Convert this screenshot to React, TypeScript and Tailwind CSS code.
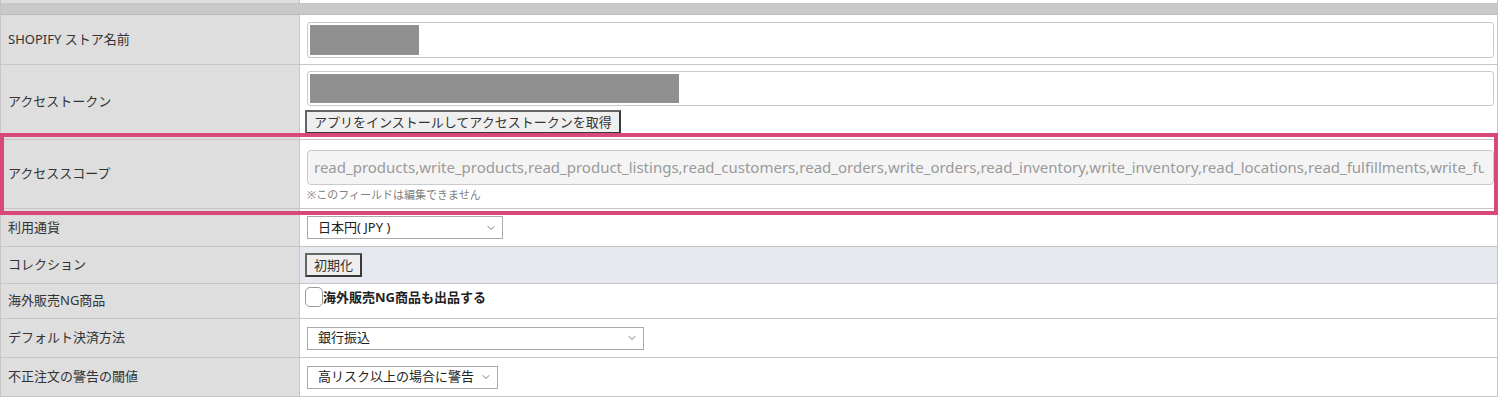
import { ChevronDown } from "lucide-react";
import type { ReactNode } from "react";

const SCOPES =
  "read_products,write_products,read_product_listings,read_customers,read_orders,write_orders,read_inventory,write_inventory,read_locations,read_fulfillments,write_fulfillments,read_shipping,write_shipping";

function Row({
  h,
  label,
  children,
  right = "bg-white",
}: {
  h: string;
  label?: string;
  children?: ReactNode;
  right?: string;
}) {
  return (
    <div className={`flex ${h} border-b border-[#c6c6c6]`}>
      <div className="w-[299px] shrink-0 bg-[#dedede] border-r border-[#c6c6c6] flex items-center pl-[7px] text-[13px] text-[#333]">
        {label}
      </div>
      <div className={`flex-1 min-w-0 flex items-center pl-[7px] pr-[3px] ${right}`}>{children}</div>
    </div>
  );
}

function FakeSelect({ w, text }: { w: string; text: string }) {
  return (
    <div
      className={`${w} h-[23px] border border-[#a9a9a9] bg-white flex items-center justify-between pl-[10px] pr-[5px] text-[13px] text-[#222]`}
    >
      <span>{text}</span>
      <ChevronDown className="h-3 w-3 text-[#555]" strokeWidth={1.6} />
    </div>
  );
}

function Btn({ children }: { children: ReactNode }) {
  return (
    <button className="h-[24px] px-[7px] -ml-[2px] border-2 border-[#3a3a3a] border-t-[#666] border-l-[#666] bg-[#efefef] text-[13px] text-[#333] leading-none">
      {children}
    </button>
  );
}

export default function App() {
  return (
    <div className="relative w-[1500px] h-[397px] bg-white font-['Noto_Sans','Noto_Sans_CJK_JP',sans-serif] overflow-hidden">
      <div className="w-[1498px] border-x border-[#c6c6c6]">
        <Row h="h-[4px]" />
        <div className="h-[11px] bg-[#c9c9c9] border-b border-[#bcbcbc]" />

        <Row h="h-[50px]" label="SHOPIFY ストア名前">
          <div className="flex-1 h-[36px] border border-[#cacaca] rounded-[3px] p-[2px]">
            <div className="w-[109px] h-full bg-[#8f8f8f]" />
          </div>
        </Row>

        <Row h="h-[75px]" label="アクセストークン">
          <div className="flex-1 min-w-0 flex flex-col items-start pt-[1px]">
            <div className="w-full h-[35px] border border-[#cacaca] rounded-[3px] p-[2px]">
              <div className="w-[369px] h-full bg-[#8f8f8f]" />
            </div>
            <div className="mt-[3px]">
              <Btn>アプリをインストールしてアクセストークンを取得</Btn>
            </div>
          </div>
        </Row>

        <Row h="h-[69px]" label="アクセススコープ">
          <div className="flex-1 min-w-0 flex flex-col pt-[5px]">
            <div className="w-full h-[35px] border border-[#cacaca] rounded-[4px] bg-[#f4f4f4] flex items-center pl-[6px] pr-[9px] overflow-hidden">
              <span className="block min-w-0 whitespace-nowrap overflow-hidden text-[15px] text-[#9a9a9a]">
                {SCOPES}
              </span>
            </div>
            <div className="mt-[2px] text-[11px] text-[#808080]">※このフィールドは編集できません</div>
          </div>
        </Row>

        <Row h="h-[38px]" label="利用通貨">
          <FakeSelect w="w-[196px]" text="日本円( JPY )" />
        </Row>

        <Row h="h-[37px]" label="コレクション" right="bg-[#e6eaf0]">
          <Btn>初期化</Btn>
        </Row>

        <Row h="h-[35px]" label="海外販売NG商品">
          <div className="flex items-start self-start pt-[3px] -ml-[2px]">
            <span className="w-[18px] h-[20px] rounded-[5px] border border-[#9a9a9a] bg-white" />
            <span className="text-[13px] font-bold text-[#222] leading-[20px]">海外販売NG商品も出品する</span>
          </div>
        </Row>

        <Row h="h-[39px]" label="デフォルト決済方法">
          <FakeSelect w="w-[337px]" text="銀行振込" />
        </Row>

        <Row h="h-[39px]" label="不正注文の警告の閾値">
          <FakeSelect w="w-[191px]" text="高リスク以上の場合に警告" />
        </Row>
      </div>

      <div className="absolute left-0 top-[133px] w-[1498px] h-[82px] border-4 border-[#d9487a] pointer-events-none" />
    </div>
  );
}
